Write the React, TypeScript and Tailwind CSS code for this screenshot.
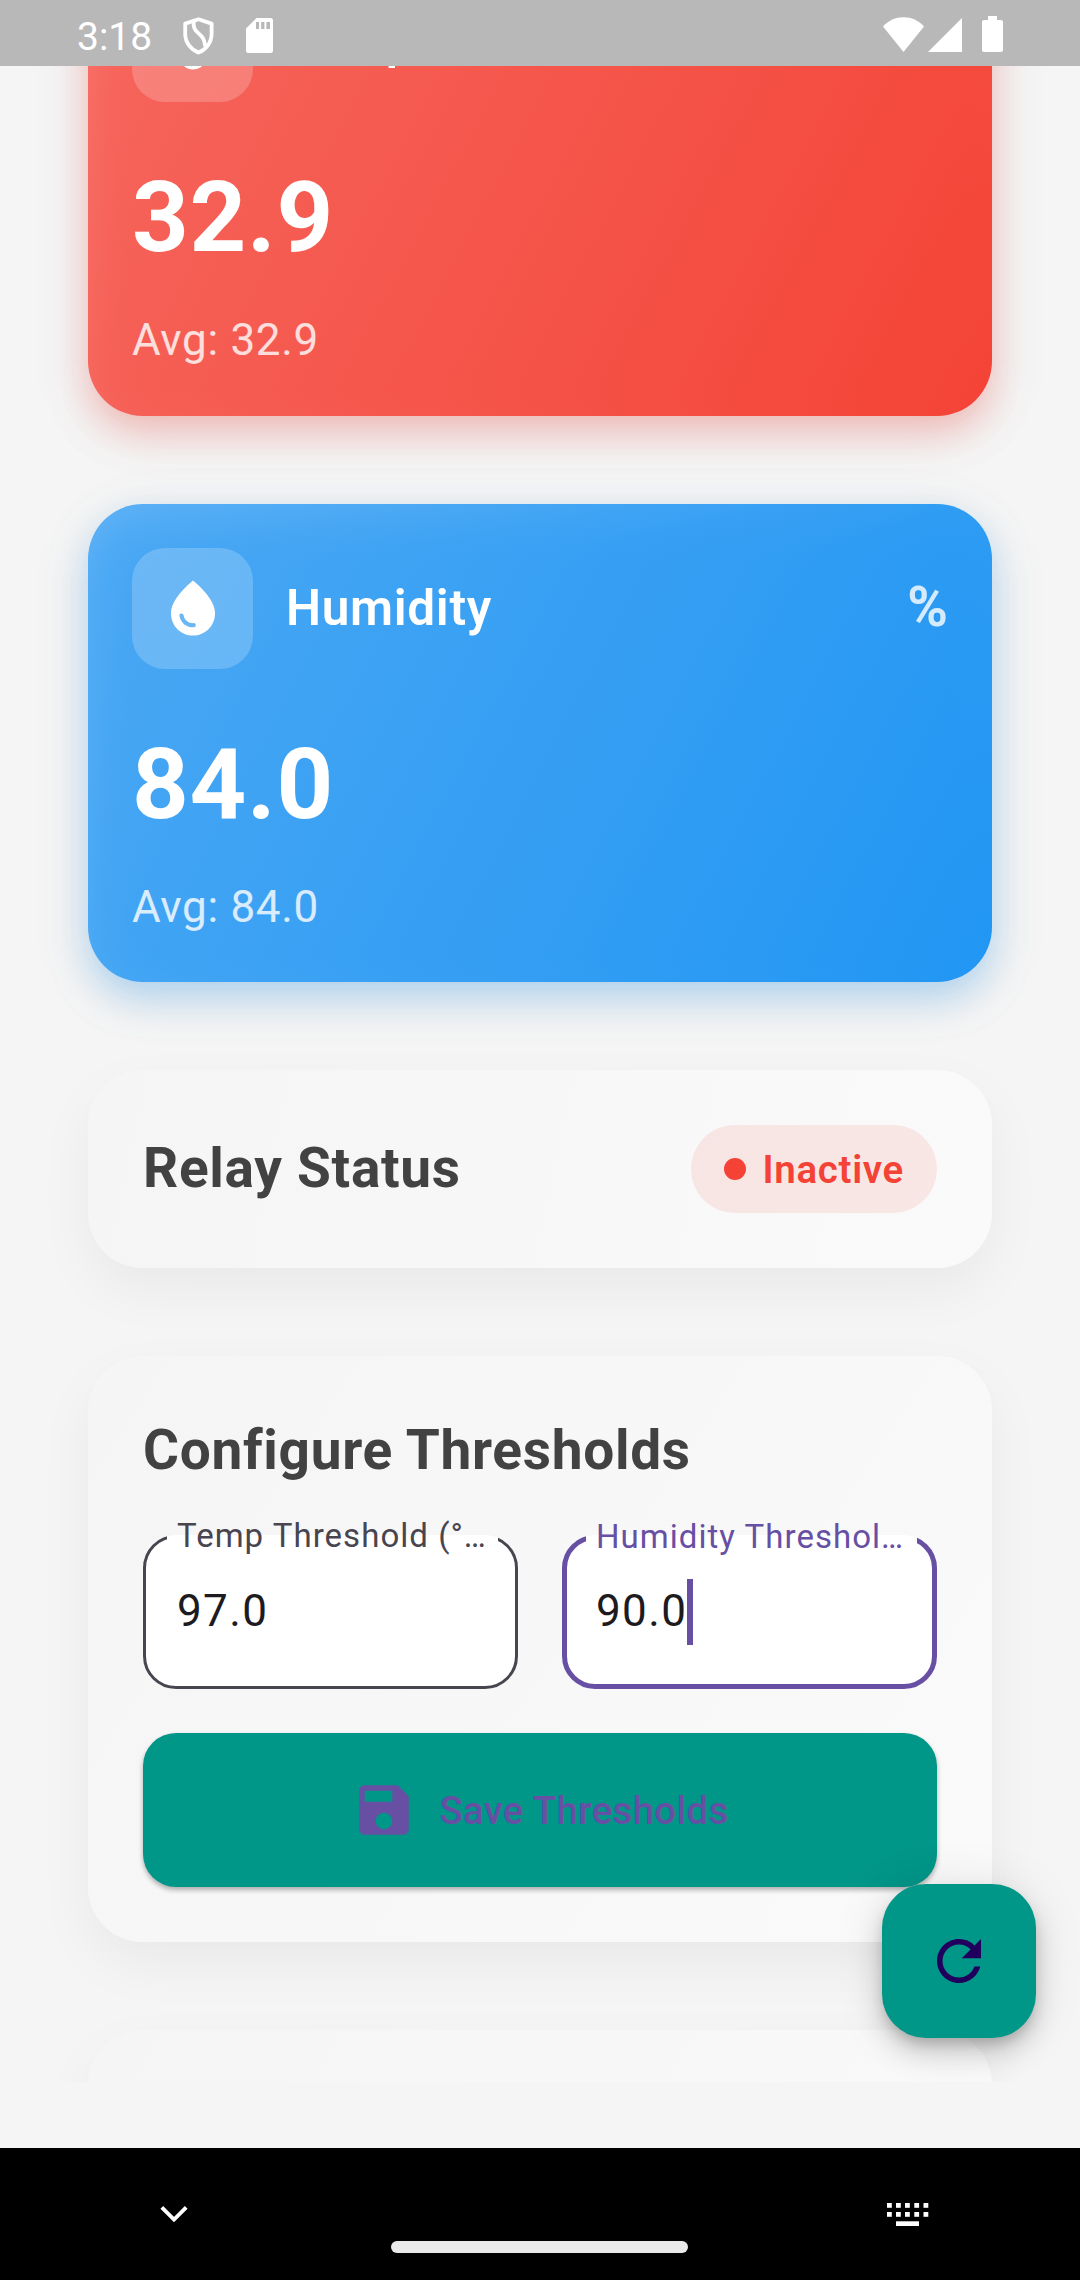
import type { ReactNode } from "react";
import { MdRefresh, MdSave, MdThermostat, MdWaterDrop } from "react-icons/md";

function StatusBar() {
  return (
    <header className="flex h-[66px] shrink-0 items-center bg-[#b8b8b8] pr-[77px] pl-[77px] text-white">
      <span className="mt-[7px] w-[106px] text-[39px] leading-[46px]">3:18</span>
      <svg className="mt-[5px] h-[38px] w-[31px]" viewBox="0 0 31 38" fill="none" stroke="currentColor" strokeWidth="3.8" strokeLinejoin="round">
        <path d="M15.5 2.2 L28.6 6.6 V17 C28.6 25.5 23 32.5 15.5 35.6 C8 32.5 2.2 25.5 2.2 17 V6.6 Z" />
        <path d="M10.8 4.2 C8.8 18 21.5 14 22.2 29.5" />
      </svg>
      <svg className="mt-[4px] ml-[32px] h-[35px] w-[27px]" viewBox="0 0 27 35" fill="currentColor">
        <path fillRule="evenodd" d="M10.5 0H24.5Q27 0 27 2.5V32.5Q27 35 24.5 35H2.5Q0 35 0 32.5V10.5ZM10 4V11H13V4ZM15.2 4V11H18.4V4ZM20.4 4V11H24V4Z" />
      </svg>
      <div className="flex-1" />
      <svg className="mt-[3px] h-[35px] w-[41px]" viewBox="0 0 41 35" fill="currentColor">
        <path d="M20.5 35L0 9.5C5.5 3.5 12.5 0.3 20.5 0.3S35.5 3.5 41 9.5Z" />
      </svg>
      <svg className="mt-[4px] ml-[4px] h-[34px] w-[34px]" viewBox="0 0 34 34" fill="currentColor">
        <path d="M34 0V34H0Z" />
      </svg>
      <svg className="mt-[2px] ml-[20px] h-[36px] w-[21px]" viewBox="0 0 21 36" fill="currentColor">
        <path d="M6 0H15V4H19Q21 4 21 6V34Q21 36 19 36H2Q0 36 0 34V6Q0 4 2 4H6Z" />
      </svg>
    </header>
  );
}

function SensorCard({ title, unit, value, icon, surface, glow }: {
  title: string;
  unit: string;
  value: string;
  icon: ReactNode;
  surface: string;
  glow: string;
}) {
  return (
    <section className="relative h-[478.5px]">
      <div className="absolute inset-0 translate-y-[14px] rounded-[55px] bg-black/5 blur-[30px]" />
      <div className={`absolute inset-0 translate-y-[16px] rounded-[55px] blur-[19px] ${glow}`} />
      <div className={`relative flex h-full flex-col rounded-[55px] p-[44px] text-white ${surface}`}>
        <div className="flex h-[121px] items-center">
          <div className="flex size-[121px] items-center justify-center rounded-[33px] bg-white/20 text-[66px]">{icon}</div>
          <h2 className="ml-[33px] flex-1 text-[49.5px] font-semibold tracking-[0.69px]">{title}</h2>
          <span className="-mt-[2px] text-[55px] font-bold text-white/80">{unit}</span>
        </div>
        <div className="mt-[45px] h-[140px] text-[99px] leading-[140px] font-bold tracking-[0.69px]">{value}</div>
        <div className="mt-[22px] h-[63px] text-[44px] leading-[63px] tracking-[0.69px] text-white/80">Avg: {value}</div>
      </div>
    </section>
  );
}

function Panel({ className, children }: { className: string; children?: ReactNode }) {
  return (
    <section className={`rounded-[55px] p-[55px] shadow-[0_22px_55px_rgba(0,0,0,0.05)] ${className}`}>{children}</section>
  );
}

function ThresholdField({ label, value, focused }: { label: string; value: string; focused?: boolean }) {
  return (
    <div className="relative h-[154px] flex-1 rounded-[33px] bg-white">
      <fieldset
        className={
          focused
            ? "absolute inset-x-0 -top-[6px] bottom-0 rounded-[33px] border-[5.5px] border-[#6750a4] pl-[19px]"
            : "absolute inset-x-0 -top-[7px] bottom-0 rounded-[33px] border-[3px] border-[#49454f] pl-[21px]"
        }
      >
        <legend
          className={
            focused
              ? "flex h-[18px] w-[331px] items-center text-[33px] tracking-[1.03px] whitespace-nowrap text-[#6750a4]"
              : "flex h-[18px] w-[331px] items-center text-[33px] tracking-[1.03px] whitespace-nowrap text-[#49454f]"
          }
        >
          <span className="-mt-[2px] pl-[10px]">{label}</span>
        </legend>
      </fieldset>
      <div className="flex h-full items-center pl-[34px] text-[44px] tracking-[1.375px] text-[#1d1b20]">
        <span className="-mt-[2px]">{value}</span>
        {focused && <span className="h-[66px] w-[5.5px] bg-[#6750a4]" />}
      </div>
    </div>
  );
}

function NavigationBar() {
  return (
    <nav className="relative flex h-[132px] shrink-0 items-center justify-between bg-black pr-[151px] pl-[159.5px] text-white">
      <svg className="h-[18px] w-[28px]" viewBox="0 0 28 18" fill="none" stroke="currentColor" strokeWidth="3.8">
        <path d="M1.8 2.4L14 14.6L26.2 2.4" />
      </svg>
      <svg className="h-[24px] w-[42px]" viewBox="0 0 42 24" fill="currentColor">
        {[0, 9].map((y) =>
          [0, 9, 18, 27.3, 36.5].map((x) => <rect key={`${x}-${y}`} x={x} y={y + 1} width="4.8" height="4.8" />),
        )}
        <rect x="9" y="19.3" width="23" height="4.7" />
      </svg>
      <div className="absolute top-[93px] left-[391px] h-[12px] w-[297px] rounded-full bg-[#eaeaea]" />
    </nav>
  );
}

export default function App() {
  return (
    <div className="relative flex h-[2280px] w-[1080px] flex-col overflow-hidden bg-[#f5f5f5] font-['Roboto',sans-serif]">
      <StatusBar />
      <main className="h-[2016px] shrink-0 overflow-hidden px-[88px]">
        <div className="-mt-[129px] flex flex-col gap-[88px]">
          <SensorCard
            title="Temperature"
            unit="°C"
            value="32.9"
            icon={<MdThermostat />}
            surface="bg-[linear-gradient(117.9deg,rgba(250,69,58,0.7),rgb(244,67,54))]"
            glow="bg-[#f44336]/30"
          />
          <SensorCard
            title="Humidity"
            unit="%"
            value="84.0"
            icon={<MdWaterDrop />}
            surface="bg-[linear-gradient(117.9deg,rgba(33,151,247,0.7),rgb(33,150,243))]"
            glow="bg-[#2196f3]/30"
          />
          <Panel className="flex h-[198px] items-center justify-between bg-[linear-gradient(102deg,#f5f5f5,#fafafa)]">
            <h2 className="-mt-[2px] text-[55px] font-bold tracking-[0.69px] text-[#424242]">Relay Status</h2>
            <div className="flex h-[88px] items-center rounded-full bg-[#f44336]/10 px-[33px] text-[#f44336]">
              <span className="size-[22px] rounded-full bg-[#f44336]" />
              <span className="mt-px ml-[16.5px] text-[38.5px] font-semibold tracking-[0.69px]">Inactive</span>
            </div>
          </Panel>
          <Panel className="h-[586px] bg-[linear-gradient(123deg,#f5f5f5,#fafafa)]">
            <h2 className="text-[55px] leading-[78px] font-bold tracking-[0.69px] text-[#424242]">Configure Thresholds</h2>
            <div className="mt-[45.5px] flex gap-[44px]">
              <ThresholdField label="Temp Threshold (°…" value="97.0" />
              <ThresholdField label="Humidity Threshol…" value="90.0" focused />
            </div>
            <button className="mt-[44px] flex h-[154px] w-full items-center justify-center rounded-[33px] bg-[#009688] text-[38.5px] font-medium tracking-[0.275px] text-[#6750a4] shadow-[0_3px_5px_rgba(0,0,0,0.3)]">
              <MdSave className="mr-[22px] text-[66px]" />
              <span className="mt-[2px]">Save Thresholds</span>
            </button>
          </Panel>
          <Panel className="h-[500px] bg-[linear-gradient(119deg,#f5f5f5,#fafafa)]" />
        </div>
      </main>
      <div className="h-[66px] shrink-0" />
      <NavigationBar />
      <button className="absolute top-[1884px] left-[882px] flex size-[154px] items-center justify-center rounded-[44px] bg-[#009688] text-[66px] text-[#21005d] shadow-[0_8px_14px_-3px_rgba(0,0,0,0.2),0_16px_28px_rgba(0,0,0,0.14),0_3px_50px_rgba(0,0,0,0.1)]">
        <MdRefresh />
      </button>
    </div>
  );
}
